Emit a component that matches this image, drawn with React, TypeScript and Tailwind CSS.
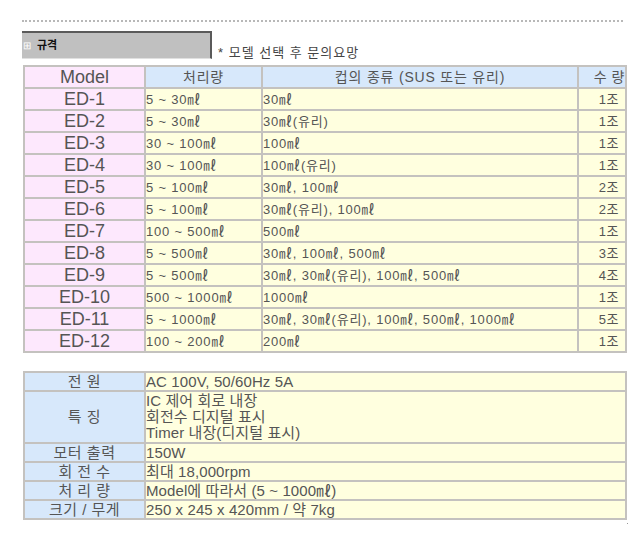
import React from "react";

const rows: [string, string, string, string][] = [
  ["ED-1", "5 ~ 30㎖", "30㎖", "1조"],
  ["ED-2", "5 ~ 30㎖", "30㎖(유리)", "1조"],
  ["ED-3", "30 ~ 100㎖", "100㎖", "1조"],
  ["ED-4", "30 ~ 100㎖", "100㎖(유리)", "1조"],
  ["ED-5", "5 ~ 100㎖", "30㎖, 100㎖", "2조"],
  ["ED-6", "5 ~ 100㎖", "30㎖(유리), 100㎖", "2조"],
  ["ED-7", "100 ~ 500㎖", "500㎖", "1조"],
  ["ED-8", "5 ~ 500㎖", "30㎖, 100㎖, 500㎖", "3조"],
  ["ED-9", "5 ~ 500㎖", "30㎖, 30㎖(유리), 100㎖, 500㎖", "4조"],
  ["ED-10", "500 ~ 1000㎖", "1000㎖", "1조"],
  ["ED-11", "5 ~ 1000㎖", "30㎖, 30㎖(유리), 100㎖, 500㎖, 1000㎖", "5조"],
  ["ED-12", "100 ~ 200㎖", "200㎖", "1조"],
];

const specs: [string, string[]][] = [
  ["전 원", ["AC 100V, 50/60Hz 5A"]],
  ["특 징", ["IC 제어 회로 내장", "회전수 디지털 표시", "Timer 내장(디지털 표시)"]],
  ["모터 출력", ["150W"]],
  ["회 전 수", ["최대 18,000rpm"]],
  ["처 리 량", ["Model에 따라서 (5 ~ 1000㎖)"]],
  ["크기 / 무게", ["250 x 245 x 420mm / 약 7kg"]],
];

const font = { fontFamily: '"Liberation Sans", "Noto Sans CJK KR", sans-serif' };

const cell = "border-2 border-[#c4c2bf] overflow-hidden whitespace-nowrap";

export default function App() {
  return (
    <div className="w-[641px] h-[543px] bg-white text-[#555]" style={font}>
      <div className="pt-[20px] pl-[22px] w-[623px]">
        <div className="border-t-2 border-dotted border-[#b8b8b8] h-0" />
        <div className="flex items-end mt-[9px]">
          <div className="w-[190px] h-[28px] bg-[#c0c0c0] border-t-2 border-r-2 border-[#5a5a5a] border-b border-b-[#e0e0e0] flex items-center">
            <span className="ml-[1px] text-white text-[10px] leading-none">⊞</span>
            <span className="ml-[6px] text-[11px] font-bold text-[#111] leading-none">규격</span>
          </div>
          <div className="ml-[6px] text-[13px] tracking-[1px] text-[#444] leading-none mb-0">* 모델 선택 후 문의요망</div>
        </div>
        <table className="mt-[6px] ml-[1px] w-[602px] border-collapse border-2 border-[#c4c2bf] table-fixed">
          <colgroup>
            <col className="w-[121px]" />
            <col className="w-[117px]" />
            <col className="w-[316px]" />
            <col className="w-[48px]" />
          </colgroup>
          <thead>
            <tr className="h-[22px]">
              <th className={`bg-[#fde8fd] ${cell} text-[18px] font-normal leading-none`}>Model</th>
              <th className={`bg-[#d7e8fb] ${cell} text-[14px] tracking-[0.8px] font-normal leading-none`}>처리량</th>
              <th className={`bg-[#d7e8fb] ${cell} text-[14px] tracking-[0.8px] font-normal leading-none`}>컵의 종류 (SUS 또는 유리)</th>
              <th className={`bg-[#d7e8fb] ${cell} text-[14px] tracking-[0.5px] font-normal leading-none text-right pr-0`}>수 량</th>
            </tr>
          </thead>
          <tbody>
            {rows.map((r) => (
              <tr key={r[0]} className="h-[22px]">
                <td className={`bg-[#fde8fd] ${cell} text-[18px] text-center leading-none`}>{r[0]}</td>
                <td className={`bg-[#ffffdf] ${cell} text-[13px] tracking-[0.8px] leading-none`}>{r[1]}</td>
                <td className={`bg-[#ffffdf] ${cell} text-[13px] tracking-[0.8px] leading-none`}>{r[2]}</td>
                <td className={`bg-[#ffffdf] ${cell} text-[13px] tracking-[0.5px] leading-none text-right pr-[6px]`}>{r[3]}</td>
              </tr>
            ))}
          </tbody>
        </table>
        <table className="mt-[18px] ml-[1px] w-[602px] border-collapse border-2 border-[#c4c2bf] table-fixed">
          <colgroup>
            <col className="w-[121px]" />
            <col className="w-[481px]" />
          </colgroup>
          <tbody>
            {specs.map(([k, v]) => (
              <tr key={k} className={v.length > 1 ? "h-[52px]" : "h-[19px]"}>
                <td className={`bg-[#d7e8fb] ${cell} text-[15px] tracking-[0.5px] text-center leading-[16px]`}>{k}</td>
                <td className={`bg-[#ffffdf] ${cell} text-[15px] tracking-[0.1px] leading-[16px]`}>
                  {v.map((line) => (
                    <div key={line}>{line}</div>
                  ))}
                </td>
              </tr>
            ))}
          </tbody>
        </table>
      </div>
      <div className="ml-[627px] mt-[3px] w-[1px] h-[1px] bg-[#999]" />
    </div>
  );
}
